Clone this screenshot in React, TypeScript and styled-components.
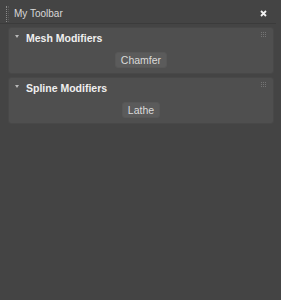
import styled, { createGlobalStyle } from 'styled-components'

const GlobalStyle = createGlobalStyle`
  html, body {
    margin: 0;
    padding: 0;
    background: #444444;
  }
  body {
    font-family: "Liberation Sans", Arial, sans-serif;
    color: #dcdcdc;
  }
`

const Window = styled.div`
  width: 281px;
  height: 300px;
  background: #444444;
  display: flex;
  flex-direction: column;
`

const TitleBar = styled.div`
  height: 24px;
  box-sizing: border-box;
  display: flex;
  align-items: center;
  padding: 3px 9px 0 6px;
  border-bottom: 1px solid #3b3b3b;
  margin-right: 5px;
`

const Grip = styled.div`
  width: 1px;
  height: 16px;
  margin: 2px 5px 0 0;
  border-left: 1px dotted #8a8a8a;
  border-right: 1px dotted #5a5a5a;
`

const Title = styled.span`
  font-size: 10px;
  color: #d8d8d8;
  flex: 1;
`

const Close = styled.svg`
  width: 7px;
  height: 7px;
`

const Panels = styled.div`
  display: flex;
  flex-direction: column;
  gap: 5px;
  padding: 4px 8px 0 9px;
`

const Panel = styled.div`
  position: relative;
  background: #4f4f4f;
  border-radius: 2px;
  box-shadow: 0 0 0 1px #484848;
  height: 45px;
  display: flex;
  flex-direction: column;
`

const Header = styled.div`
  height: 17px;
  display: flex;
  align-items: center;
  padding-left: 6px;
  padding-top: 1px;
`

const Arrow = styled.span`
  width: 0;
  height: 0;
  border-left: 2px solid transparent;
  border-right: 2px solid transparent;
  border-top: 3px solid #b8b8b8;
  margin: 0 7px 2px 0;
`

const HeaderText = styled.span`
  font-size: 10.5px;
  font-weight: 700;
  color: #efefef;
`

const Dots = styled.svg`
  position: absolute;
  top: 4px;
  right: 6px;
  width: 6px;
  height: 6px;
`

const Body = styled.div`
  flex: 1;
  display: flex;
  justify-content: center;
  align-items: flex-start;
  padding-top: 6px;
`

const Button = styled.button`
  font-family: "Liberation Sans", Arial, sans-serif;
  font-size: 10.5px;
  color: #dadada;
  background: #5b5b5b;
  border: 1px solid #575757;
  border-radius: 3px;
  height: 16px;
  line-height: 14px;
  padding: 0 5px;
`

type RolloutProps = {
  title: string
  action: string
}

const dotSpots = [0, 2, 4]

function Rollout({ title, action }: RolloutProps) {
  return (
    <Panel>
      <Header>
        <Arrow />
        <HeaderText>{title}</HeaderText>
      </Header>
      <Dots viewBox="0 0 6 6">
        {dotSpots.map(y =>
          dotSpots.map(x => <rect key={`${x}-${y}`} x={x} y={y} width="1" height="1" fill="#747474" />)
        )}
      </Dots>
      <Body>
        <Button>{action}</Button>
      </Body>
    </Panel>
  )
}

export default function App() {
  return (
    <Window>
      <GlobalStyle />
      <TitleBar>
        <Grip />
        <Title>My Toolbar</Title>
        <Close viewBox="0 0 7 7">
          <path d="M1 1 L6 6 M6 1 L1 6" stroke="#f2f2f2" strokeWidth="1.8" />
        </Close>
      </TitleBar>
      <Panels>
        <Rollout title="Mesh Modifiers" action="Chamfer" />
        <Rollout title="Spline Modifiers" action="Lathe" />
      </Panels>
    </Window>
  )
}
